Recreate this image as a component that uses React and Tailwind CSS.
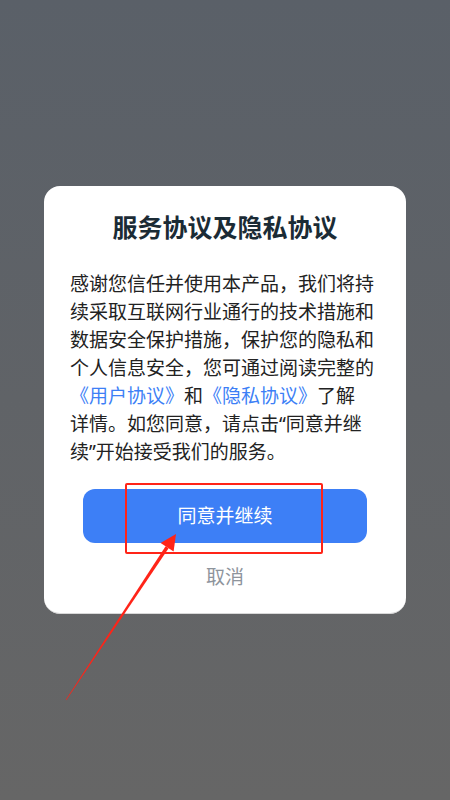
export default function App() {
  return (
    <main className="relative h-[800px] w-[450px] overflow-hidden bg-gradient-to-b from-[#5a6068] to-[#666666] font-['Noto_Sans','Noto_Sans_CJK_SC',sans-serif] flex items-center justify-center">
      {/* 协议弹窗 */}
      <div className="w-[362px] rounded-[16px] bg-white border-b border-[#d8d8d8] pt-[25px] pb-[22px] flex flex-col items-center">
        <h1 className="text-[25px] leading-[32px] font-bold text-[#1b2b35]">服务协议及隐私协议</h1>

        <p className="mt-[27px] w-full pl-[26px] pr-[20px] text-[19px] leading-[28px] text-[#222222]">
          感谢您信任并使用本产品，我们将持<br />
          续采取互联网行业通行的技术措施和<br />
          数据安全保护措施，保护您的隐私和<br />
          个人信息安全，您可通过阅读完整的<br />
          <span className="text-[#3d7ff6]">《用户协议》</span>和<span className="text-[#3d7ff6]">《隐私协议》</span>了解<br />
          详情。如您同意，请点击“同意并继<br />
          续”开始接受我们的服务。
        </p>

        <button className="mt-[23px] h-[54px] w-[284px] rounded-[12px] bg-[#3d7ff6] text-[19px] text-white">
          同意并继续
        </button>
        <button className="mt-[20px] h-[28px] text-[19px] leading-[28px] text-[#8e949c]">取消</button>
      </div>

      {/* 标注 */}
      <div className="pointer-events-none absolute left-[125px] top-[483px] h-[71px] w-[198px] rounded-[2px] border-2 border-[#ff2418]" />
      <svg className="pointer-events-none absolute left-0 top-0" width="450" height="800" viewBox="0 0 450 800">
        <polygon points="66.2,700.2 65.8,699.8 165.6,546.3 168.6,548.3" fill="#ff2418" />
        <polygon points="176,534 173.6,551.6 160.6,543" fill="#ff2418" />
      </svg>
    </main>
  );
}
